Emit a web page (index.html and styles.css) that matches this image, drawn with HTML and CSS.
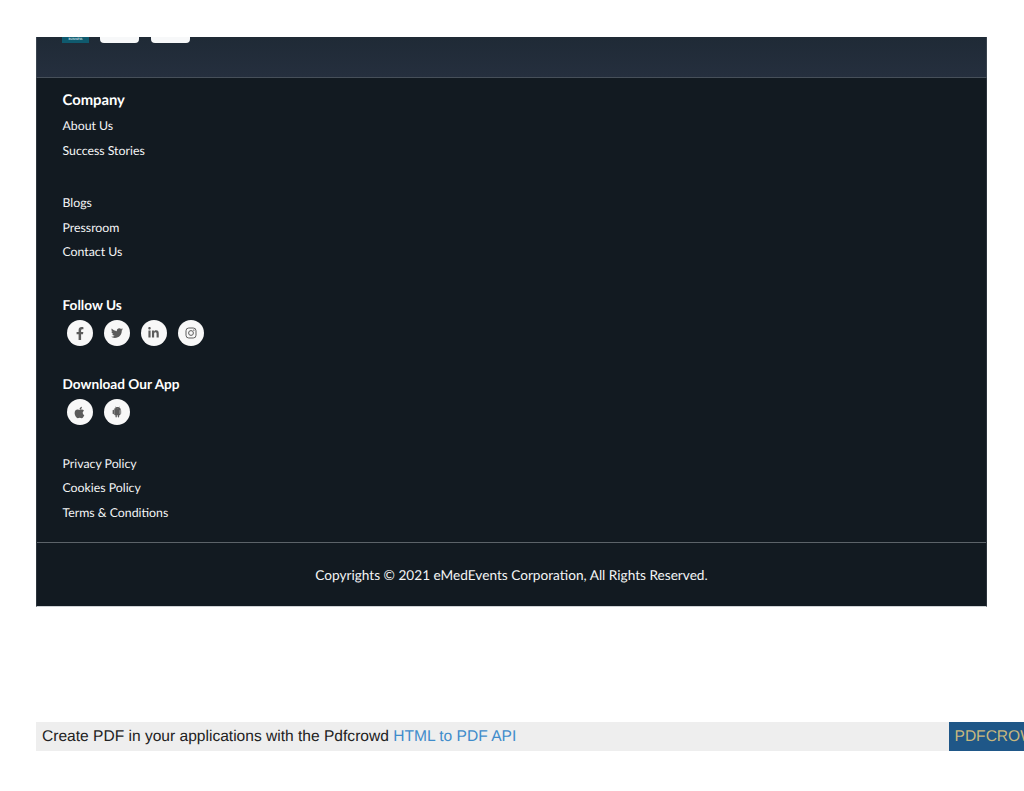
FILE: index.html
```html
<!DOCTYPE html>
<html lang="en">
<head>
<meta charset="utf-8">
<title>eMedEvents footer</title>
<link rel="stylesheet" href="styles.css">
</head>
<body>
<div class="page">
  <div class="top-band">
    <div class="badges">
      <div class="badge-logo"><span>BUSINESS</span></div>
      <div class="badge-store"></div>
      <div class="badge-store"></div>
    </div>
  </div>
  <footer class="footer">
    <div class="footer-main">
      <h4 class="heading heading-first">Company</h4>
      <ul class="links">
        <li>About Us</li>
        <li>Success Stories</li>
      </ul>
      <ul class="links links-gap">
        <li>Blogs</li>
        <li>Pressroom</li>
        <li>Contact Us</li>
      </ul>
      <h5 class="heading heading-sub follow">Follow Us</h5>
      <div class="icons">
        <span class="icon"><svg viewBox="0 0 320 512" width="8" height="13"><path d="M279 288l14-93h-89v-60c0-25 12-50 52-50h41V7s-37-7-72-7c-73 0-121 45-121 125v70H23v93h81v224h100V288z"/></svg></span>
        <span class="icon"><svg viewBox="0 0 512 512" width="12" height="12"><path d="M459 152c.3 4.500 .3 9 .3 13.600 0 139-105.800 299-299.200 299-59.600 0-115-17.300-161.600-47.200 8.500 1 16.600 1.300 25.300 1.300 49.200 0 94.400-16.600 130.600-45-46.200-1-85-31.300-98.300-73 6.500 1 13 1.600 19.800 1.600 9.500 0 18.900-1.300 27.700-3.600C54.300 289 18.300 247 18.300 196v-1.300c14 7.800 30.200 12.700 47.400 13.300-28.300-18.900-46.900-51.200-46.900-87.800 0-19.500 5.200-37.400 14.300-53 51.900 64 129.900 105.800 217.400 110.400-1.600-7.800-2.600-16-2.600-24 0-58 47-105.200 105.200-105.200 30.300 0 57.700 12.700 76.900 33.200 23.800-4.500 46.500-13.500 66.800-25.700-7.800 24.300-24.300 44.800-46.200 57.800 21.100-2.300 41.600-8.100 60.500-16.300-14.300 20.900-32.200 39.400-52.700 54.300z"/></svg></span>
        <span class="icon"><svg viewBox="0 0 448 512" width="11" height="12"><path d="M100 448H7V149h93zM53 108C24 108 0 83 0 53a53 53 0 0 1 107 0c0 30-24 55-54 55zm395 340h-93V302c0-35-1-79-48-79-48 0-56 38-56 77v148h-93V149h89v41h1c12-24 43-48 88-48 94 0 112 62 112 142z"/></svg></span>
        <span class="icon"><svg viewBox="0 0 24 24" width="12" height="12" class="outline"><rect x="2" y="2" width="20" height="20" rx="5.500"/><circle cx="12" cy="12" r="4.800"/><circle cx="17.800" cy="6.200" r="0.600"/></svg></span>
      </div>
      <h5 class="heading heading-sub download">Download Our App</h5>
      <div class="icons">
        <span class="icon"><svg viewBox="0 0 384 512" width="11" height="13"><path d="M319 269c0-37 16-64 50-85-19-27-48-42-86-45-36-3-76 21-90 21-15 0-50-20-77-20C59 141 0 185 0 274c0 26 5 53 15 81 13 37 60 128 109 126 25-1 43-18 76-18 32 0 48 18 76 18 50-1 92-83 105-120-67-32-62-92-62-92zM262 104c28-33 25-63 25-74-25 1-53 17-69 36-18 20-28 45-26 73 27 2 51-12 70-35z"/></svg></span>
        <span class="icon"><svg viewBox="0 0 448 512" width="10" height="12"><path d="M89 186v134c0 18-13 32-30 32s-31-14-31-32V186c0-17 14-31 31-31s30 14 30 31zm11 182c0 18 15 33 33 33h22v71c0 18 14 32 31 32s31-14 31-32v-71h41v71c0 18 14 32 31 32s31-14 31-32v-71h22c18 0 33-15 33-33V161H100zm248-207H100c0-50 30-93 74-115l-22-41c-3-6 5-10 8-4l23 41c41-18 88-17 127 0l23-41c3-6 11-2 8 4l-22 41c43 22 74 65 74 115zm-178-63a9 9 0 1 0-18 0 9 9 0 0 0 18 0zm104 0a9 9 0 1 0-18 0 9 9 0 0 0 18 0zm136 88v134c0 18-14 32-31 32s-31-14-31-32V186c0-17 14-31 31-31s31 14 31 31z"/></svg></span>
      </div>
      <ul class="links legal">
        <li>Privacy Policy</li>
        <li>Cookies Policy</li>
        <li>Terms &amp; Conditions</li>
      </ul>
    </div>
    <div class="copyright">Copyrights © 2021 eMedEvents Corporation, All Rights Reserved.</div>
  </footer>
  <div class="pdf-bar">
    <div class="pdf-text">Create PDF in your applications with the Pdfcrowd <a class="pdf-link">HTML to PDF API</a></div>
    <div class="pdf-brand">PDFCROWD</div>
  </div>
</div>
</body>
</html>
```
FILE: styles.css
```css
* { box-sizing: border-box; }
html, body { margin: 0; padding: 0; background: #fff; overflow: hidden; }
.page {
  width: 1024px;
  height: 791px;
  padding: 37px 0 0 36px;
  overflow: hidden;
  font-family: Lato, "Open Sans", sans-serif;
  text-rendering: geometricPrecision;
}
.top-band {
  width: 951px;
  height: 41px;
  background: linear-gradient(#1f2a36, #252f3e);
  border-bottom: 1px solid #47505a;
  border-left: 1px solid #3a444f;
  border-right: 1px solid #3a444f;
  padding-left: 25px;
}
.badges { display: flex; gap: 12px; align-items: flex-start; }
.badge-logo {
  width: 27px;
  height: 6px;
  margin-right: -1px;
  background: #0f5a6e;
  color: #cfe4ea;
  font-size: 3px;
  line-height: 4px;
  text-align: center;
  overflow: hidden;
  font-weight: 700;
}
.badge-store {
  width: 39px;
  height: 6px;
  background: #f7f8f9;
  border-radius: 0 0 4px 4px;
}
.footer {
  width: 951px;
  height: 529px;
  background: #121a21;
  color: #f4f5f6;
  border-left: 1px solid #2c343c;
  border-right: 1px solid #2c343c;
  border-bottom: 1px solid #cfd3d6;
  display: flex;
  flex-direction: column;
}
.footer-main { padding: 12px 0 0 25.500px; height: 465px; border-bottom: 1px solid #5c6369; }
.heading { margin: 0; color: #fff; font-weight: 700; }
.heading-first { font-size: 14.800px; line-height: 20px; }
.heading-sub { font-size: 13.650px; line-height: 20px; }
.links { list-style: none; margin: 0; padding: 0; font-size: 12.300px; }
.links li { height: 24.500px; line-height: 24.500px; white-space: nowrap; }
.heading-first + .links { margin-top: 4px; }
.links-gap { margin-top: 28px; }
.follow { margin-top: 30px; }
.download { margin-top: 27.500px; }
.icons { display: flex; gap: 11px; padding-left: 4px; margin-top: 5.500px; }
.icon {
  width: 26px;
  height: 26px;
  border-radius: 50%;
  background: #f8f8f8;
  display: flex;
  align-items: center;
  justify-content: center;
  flex: none;
}
.icon svg { fill: #5b5b5b; display: block; }
.icon svg.outline { fill: none; stroke: #5b5b5b; stroke-width: 2; }
.legal { margin-top: 26.500px; }
.copyright {
  flex: 1;
  display: flex;
  align-items: center;
  justify-content: center;
  font-size: 13.650px;
  color: #f4f5f6;
}
.pdf-bar {
  width: 988px;
  margin-top: 115px;
  height: 29px;
  background: #eee;
  display: flex;
  justify-content: space-between;
  font-family: "Liberation Sans", Arial, sans-serif;
  font-size: 15.570px;
  line-height: 29px;
}
.pdf-text { padding-left: 6px; color: #222; white-space: nowrap; }
.pdf-link { color: #3f8ccb; }
.pdf-brand {
  width: 75px;
  flex: none;
  padding-left: 5.500px;
  background: #1f5788;
  color: #c8b77e;
  white-space: nowrap;
  overflow: hidden;
}
```
